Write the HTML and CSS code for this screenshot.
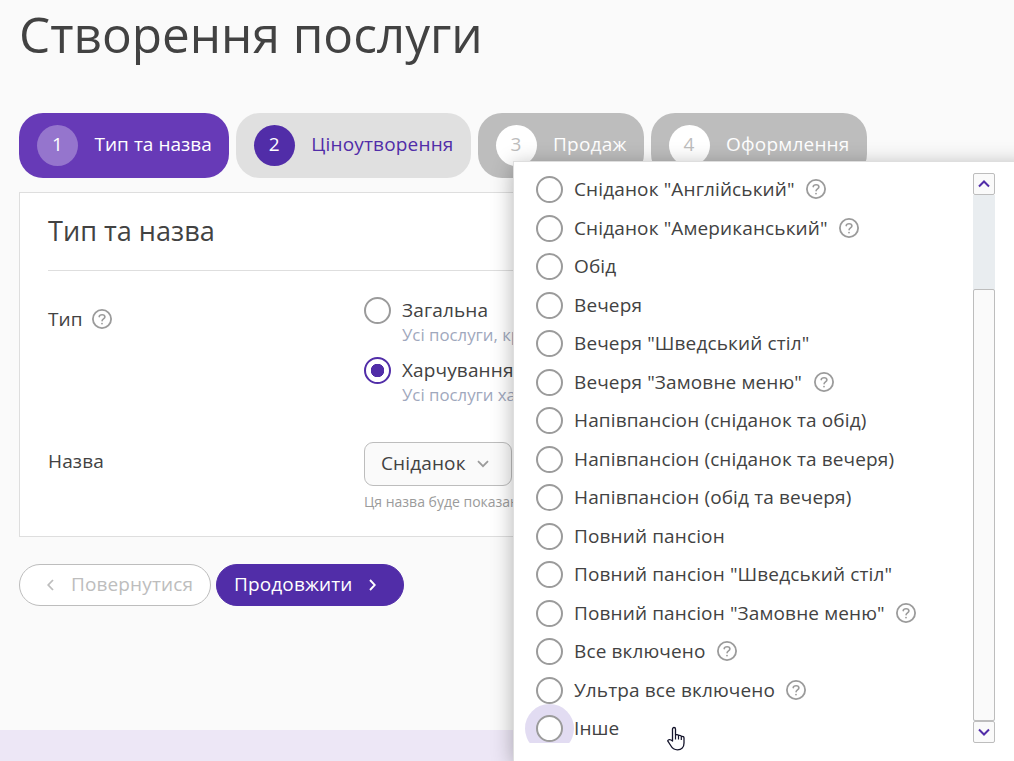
FILE: index.html
```html
<!DOCTYPE html>
<html lang="uk">
<head>
    <meta charset="UTF-8">
    <meta name="viewport" content="width=device-width, initial-scale=1.0">
    <title>Створення послуги</title>
    <link rel="stylesheet" href="styles.css">
</head>
<body>
    <svg class="sprite">
        <symbol id="help" viewBox="0 0 20 20">
            <circle cx="10" cy="10" r="9.1" fill="none" stroke="#9b9b9b" stroke-width="1.8"/>
            <path d="M7.2 7.7C7.5 5.2 12.8 5 12.9 7.9c0 2-2.7 1.9-2.8 3.9" fill="none" stroke="#9b9b9b" stroke-width="1.6" stroke-linecap="round"/>
            <circle cx="10" cy="14.6" r="0.9" fill="#9b9b9b"/>
        </symbol>
    </svg>

    <main class="page">
        <h1>Створення послуги</h1>

        <div class="steps">
            <div class="step active"><span class="step-number">1</span><span class="step-title">Тип та назва</span></div>
            <div class="step next"><span class="step-number">2</span><span class="step-title">Ціноутворення</span></div>
            <div class="step"><span class="step-number">3</span><span class="step-title">Продаж</span></div>
            <div class="step"><span class="step-number">4</span><span class="step-title">Оформлення</span></div>
        </div>

        <section class="card">
            <h2>Тип та назва</h2>
            <div class="field type-field">
                <div class="label">Тип <svg class="help"><use href="#help"/></svg></div>
                <div class="choices">
                    <div class="choice">
                        <span class="radio"></span>
                        <div>
                            <div class="choice-title">Загальна</div>
                            <div class="choice-note">Усі послуги, крім</div>
                        </div>
                    </div>
                    <div class="choice">
                        <span class="radio checked"></span>
                        <div>
                            <div class="choice-title">Харчування</div>
                            <div class="choice-note">Усі послуги харч.</div>
                        </div>
                    </div>
                </div>
            </div>
            <div class="field name-field">
                <div class="label">Назва</div>
                <div>
                    <div class="select"><span>Сніданок</span>
                        <svg width="12" height="8" viewBox="0 0 12 8"><path d="M1 1.2l5 5 5-5" fill="none" stroke="#9b9b9b" stroke-width="1.8"/></svg>
                    </div>
                    <div class="hint">Ця назва буде показана</div>
                </div>
            </div>
        </section>

        <div class="actions">
            <button class="button back">
                <svg width="7" height="12" viewBox="0 0 7 12"><path d="M6 1L1.2 6 6 11" fill="none" stroke="currentColor" stroke-width="1.8"/></svg>
                <span>Повернутися</span>
            </button>
            <button class="button continue">
                <span>Продовжити</span>
                <svg width="7" height="12" viewBox="0 0 7 12"><path d="M1 1l4.8 5L1 11" fill="none" stroke="currentColor" stroke-width="1.9"/></svg>
            </button>
        </div>
    </main>

    <footer class="footer"></footer>

    <div class="dropdown">
        <div class="options">
            <div class="option"><span class="radio"></span>Сніданок "Англійський" <svg class="help"><use href="#help"/></svg></div>
            <div class="option"><span class="radio"></span>Сніданок "Американський" <svg class="help"><use href="#help"/></svg></div>
            <div class="option"><span class="radio"></span>Обід</div>
            <div class="option"><span class="radio"></span>Вечеря</div>
            <div class="option"><span class="radio"></span>Вечеря "Шведський стіл"</div>
            <div class="option"><span class="radio"></span>Вечеря "Замовне меню" <svg class="help"><use href="#help"/></svg></div>
            <div class="option"><span class="radio"></span>Напівпансіон (сніданок та обід)</div>
            <div class="option"><span class="radio"></span>Напівпансіон (сніданок та вечеря)</div>
            <div class="option"><span class="radio"></span>Напівпансіон (обід та вечеря)</div>
            <div class="option"><span class="radio"></span>Повний пансіон</div>
            <div class="option"><span class="radio"></span>Повний пансіон "Шведський стіл"</div>
            <div class="option"><span class="radio"></span>Повний пансіон "Замовне меню" <svg class="help"><use href="#help"/></svg></div>
            <div class="option"><span class="radio"></span>Все включено <svg class="help"><use href="#help"/></svg></div>
            <div class="option"><span class="radio"></span>Ультра все включено <svg class="help"><use href="#help"/></svg></div>
            <div class="option hovered"><span class="radio"></span>Інше</div>
        </div>
        <div class="scrollbar">
            <div class="scroll-button"><svg width="12" height="8" viewBox="0 0 12 8"><path d="M1 6.5l5-5 5 5" fill="none" stroke="#512da8" stroke-width="2"/></svg></div>
            <div class="scroll-track"><div class="scroll-thumb"></div></div>
            <div class="scroll-button"><svg width="12" height="8" viewBox="0 0 12 8"><path d="M1 1.5l5 5 5-5" fill="none" stroke="#512da8" stroke-width="2"/></svg></div>
        </div>
    </div>

    <svg class="cursor" width="20" height="26" viewBox="0 0 20 26">
        <path d="M6.5 15V3C6.5 1 9.5 1 9.5 3v5.500c2 0 3 .2 3 1 1.500-.3 2.700 0 2.800.9 1.800-.2 2.700.4 2.700 1.600v5c0 4.500-2.500 6.800-6.500 6.800-4 0-5.300-1.500-6.800-4.300l-3-4.700c.8-1.800 2.800-1.300 4.800.2z" fill="#fff" stroke="#14142b" stroke-width="1.3" stroke-linejoin="round"/>
        <path d="M9.5 8.5v5M12.5 9.5V13.5M15.3 10.5V14" stroke="#14142b" stroke-width="1.2"/>
    </svg>
</body>
</html>
```
FILE: styles.css
```css
* {
    box-sizing: border-box;
}

body {
    margin: 0;
    height: 761px;
    display: flex;
    flex-direction: column;
    overflow: hidden;
    position: relative;
    background-color: #fafafa;
    color: #424242;
    font-family: "Open Sans", sans-serif;
    font-size: 19px;
    line-height: 26px;
    letter-spacing: 0.13px;
}

.sprite {
    position: absolute;
    width: 0;
    height: 0;
}

.page {
    flex: 1;
    padding: 0 19px;
}

h1 {
    margin: 0 0 45px;
    height: 68px;
    font-size: 49.5px;
    font-weight: 400;
    line-height: 68px;
    letter-spacing: 0;
}

.steps {
    display: flex;
    gap: 7px;
    margin-bottom: 14px;
}

.step {
    display: flex;
    align-items: center;
    height: 65px;
    padding: 0 17px 0 18px;
    border-radius: 24px;
    background-color: #bdbdbd;
    color: #fff;
    letter-spacing: 0.2px;
    white-space: nowrap;
}

.step-number {
    width: 41px;
    height: 41px;
    margin-right: 16.5px;
    border-radius: 50%;
    background-color: #fff;
    color: #bdbdbd;
    line-height: 39px;
    text-align: center;
}

.step-title {
    padding-bottom: 3px;
}

.step.active {
    background-color: #673ab7;
    letter-spacing: 0.03px;
}

.step.active .step-number {
    background-color: #9575cd;
    color: #fff;
}

.step.next {
    background-color: #e0e0e0;
    color: #512da8;
    letter-spacing: 0.18px;
}

.step.next .step-number {
    background-color: #512da8;
    color: #fff;
}

.card {
    width: 1000px;
    max-width: 100%;
    height: 345px;
    padding: 0 28px;
    border: 1px solid #dedede;
    background-color: #fff;
}

h2 {
    margin: 0;
    height: 78px;
    border-bottom: 1px solid #dedede;
    font-size: 27.1px;
    font-weight: 400;
    line-height: 75px;
    letter-spacing: 0;
}

.field {
    display: flex;
}

.label {
    display: flex;
    align-items: center;
    width: 316px;
    height: 26px;
}

.help {
    width: 20px;
    height: 20px;
    margin-left: 12px;
}

.type-field {
    padding-top: 26px;
}

.type-field .label {
    margin-top: 9px;
}

.type-field .help {
    margin-left: 9px;
}

.choice {
    display: flex;
    height: 60.4px;
}

.choice-title {
    line-height: 26px;
}

.choice-note {
    color: #9fa8bd;
    font-size: 16.8px;
    line-height: 23px;
    letter-spacing: 0;
}

.radio {
    flex: none;
    width: 27px;
    height: 27px;
    margin-right: 11px;
    border: 2px solid #9b9b9b;
    border-radius: 50%;
    background-color: #fff;
}

.radio.checked {
    border-color: #512da8;
    background: radial-gradient(circle, #512da8 6.5px, #fff 7px);
}

.name-field {
    padding-top: 24.2px;
}

.name-field .label {
    margin-top: 6px;
}

.select {
    display: flex;
    align-items: center;
    gap: 11px;
    width: 148px;
    height: 44px;
    padding-left: 16px;
    border: 1px solid #bdbdbd;
    border-radius: 9px;
    background-color: #fafafa;
}

.select span,
.button span {
    padding-bottom: 2px;
}

.hint {
    margin-top: 5px;
    color: #9b9b9b;
    font-size: 14px;
    line-height: 22px;
    letter-spacing: 0;
}

.actions {
    display: flex;
    gap: 5px;
    margin-top: 27px;
}

.button {
    display: flex;
    align-items: center;
    height: 42px;
    padding: 0;
    border: 1px solid #bdbdbd;
    border-radius: 21px;
    font: inherit;
    letter-spacing: inherit;
}

.back {
    width: 192px;
    padding-left: 27px;
    gap: 17px;
    background-color: #fff;
    color: #bdbdbd;
}

.continue {
    width: 188px;
    padding-left: 17px;
    gap: 16px;
    border-color: #512da8;
    background-color: #512da8;
    color: #fff;
}

.footer {
    height: 31px;
    background-color: #ede7f6;
}

.dropdown {
    position: absolute;
    top: 161px;
    left: 513px;
    right: -20px;
    height: 600px;
    display: flex;
    padding: 11px 0 0 11px;
    border: 1px solid #dedede;
    border-bottom: none;
    background-color: #fff;
    box-shadow: 0 4px 20px rgba(0, 0, 0, 0.3);
}

.options {
    width: 448px;
    height: 570px;
    overflow: hidden;
}

/* the list is scrolled almost to the end */
.option:first-child {
    margin-top: -2.8px;
}

.option {
    display: flex;
    align-items: center;
    height: 38.5px;
    padding-left: 11px;
}

.option .radio {
    position: relative;
    top: 0.4px;
}

.option .help {
    margin-left: 11.5px;
}

.hovered .radio {
    box-shadow: 0 0 0 11px #e2dcf2;
}

.scrollbar {
    display: flex;
    flex-direction: column;
    width: 22px;
    height: 570px;
}

.scroll-button {
    display: flex;
    align-items: center;
    justify-content: center;
    height: 22px;
    border: 1px solid #bdbdbd;
    border-radius: 2px;
    background-color: #fafafa;
}

.scroll-track {
    flex: 1;
    padding-top: 94px;
    background-color: #e9edf0;
}

.scroll-thumb {
    height: 100%;
    border: 1px solid #bdbdbd;
    border-radius: 2px;
    background-color: #fafafa;
}

.cursor {
    position: absolute;
    left: 665.5px;
    top: 726px;
}
```
